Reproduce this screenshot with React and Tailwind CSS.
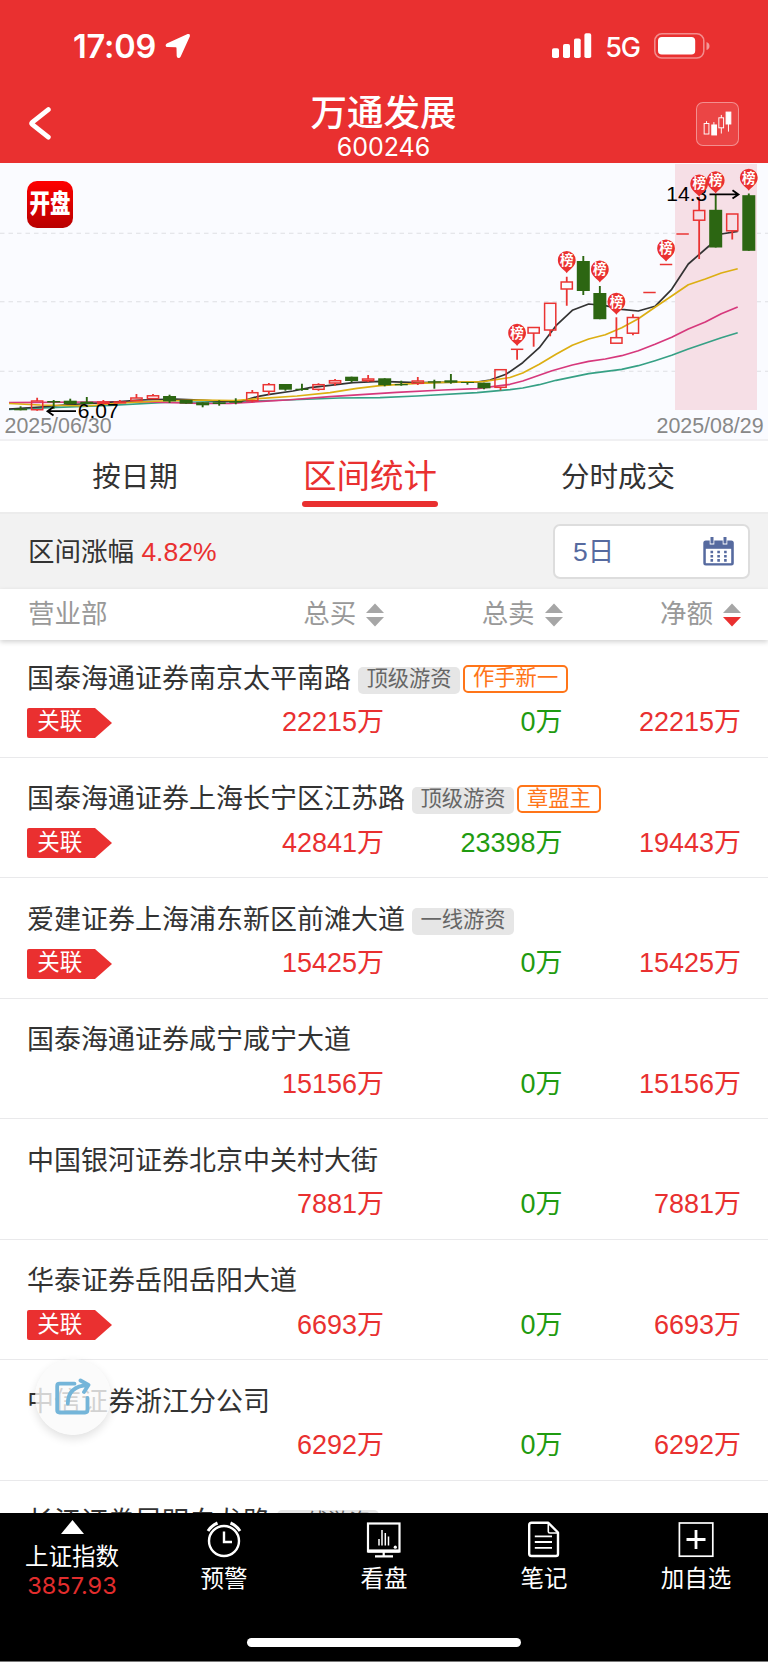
const CANDLE_START = 20.6;
const CANDLE_STEP = 16.55;

// [direction, body top, body bottom, wick top, wick bottom]
const candles = [
  ['down', 408.7, 410.3, 406.3, 410.3],
  ['up', 401, 409.7, 397.7, 410.7],
  ['down', 401, 402.5, 400, 408.7],
  ['down', 400.7, 404, 398.7, 404],
  ['down', 401.7, 404, 397, 404],
  ['up', 402, 403.4, 400, 404.3],
  ['up', 402, 402.8, 400, 403],
  ['up', 398, 400.4, 394, 400.4],
  ['up', 395.8, 398.6, 394, 398.6],
  ['down', 396, 401.3, 394.7, 403],
  ['down', 400, 403.7, 400, 403.7],
  ['down', 402.3, 405.3, 402.3, 407.3],
  ['down', 402.3, 404, 400.3, 405.7],
  ['down', 401, 402.7, 398.3, 404.3],
  ['up', 392.7, 400.7, 390, 402.3],
  ['up', 384.7, 391.3, 383, 395],
  ['down', 384, 389.7, 384, 390.7],
  ['down', 388.7, 390, 383.7, 390.7],
  ['up', 384.7, 389.3, 383.3, 390.7],
  ['up', 380.7, 383, 379, 385.7],
  ['down', 376.7, 381, 376.7, 382.3],
  ['up', 379, 380.7, 375, 382],
  ['down', 378.3, 385.3, 378.3, 386.3],
  ['down', 384, 385.3, 380.7, 385.7],
  ['up', 381, 383.3, 377, 385],
  ['down', 381.3, 382.7, 379.7, 388.7],
  ['down', 380.3, 382.7, 374, 383.7],
  ['down', 382, 383, 382, 384.7],
  ['down', 382.7, 388.3, 382.7, 389.3],
  ['up', 369.7, 387.3, 369.7, 390.3],
  ['up', 349.3, 349.3, 349.3, 359.7],
  ['up', 327.5, 333.1, 327.5, 346.7],
  ['up', 303.3, 330, 303.3, 336.3],
  ['up', 282, 289, 276.7, 305.7],
  ['down', 261, 291, 256, 295],
  ['down', 293, 319.2, 286, 319.2],
  ['up', 337.7, 343.2, 317.3, 343.2],
  ['up', 317.5, 333.2, 314.3, 335.3],
  ['up', 292.5, 292.5, 292.5, 292.5],
  ['up', 264.5, 264.5, 264.5, 264.5],
  ['up', 234, 234, 234, 234],
  ['up', 210.5, 220.2, 197, 259],
  ['down', 209.8, 247.5, 195, 247.5],
  ['up', 214, 230.8, 214, 239.5],
  ['down', 195.2, 250.8, 193.5, 250.8],
];

// [candle index, centre y]
const pins = [
  [30, 332.7],
  [33, 260],
  [35, 269.3],
  [36, 301.6],
  [39, 248.3],
  [41, 183.5],
  [42, 180.2],
  [44, 177.6],
];

const averages = [
  {
    color: '#36a085',
    points:
      '9,409.3 50,407.7 110,405.3 165,402.5 200,402 230,401.7 287,400 340,398 380,397.7 417,396 477,392.7 510,389.7 522.7,388 539.3,384.7 556,380.3 588.7,373.7 621.7,369.3 638.3,365.7 655,360.7 671.7,355.3 688.3,349 721.3,337.7 737.7,332.7',
  },
  {
    color: '#d6387c',
    points:
      '9,402.7 90,402 140,401.6 200,403.5 230,403.3 287,400 330,396.7 396.7,392.3 443,390 477,388.7 510,384.3 522.7,381 552,370.7 572.3,365 588.7,361.3 605.3,359 621.7,355.7 638.3,350.7 655,344.3 671.7,337.3 688.3,329 705.3,322 721.3,313.7 737.7,307',
  },
  {
    color: '#333',
    points:
      '9,409 40,407 70,404.5 100,403 140,400 175,399 200,400 225,401.5 242,401 257,396.7 268,394.7 293,391 310,387.7 330,385.3 353,382.7 380,381.3 417,382.7 477,382 490,380 506,374.3 522.7,362.7 539.3,347.7 556,325.7 572.3,310.3 588.7,304 605.3,305.7 621.7,309.3 638.3,311 655,306.3 671.7,289.3 688.3,264 709,246 721.3,234 737.7,231.3',
  },
  {
    color: '#dcae12',
    points:
      '9,403.5 40,405 87,406 120,403 160,401 200,400 235,400.5 258,398.7 297,396 330,392.7 357,388.3 380,385.7 417,383.3 443,382.3 483,381.7 510,377.5 522.7,373 539.3,364.3 556,354.3 572.3,345.3 588.7,339 605.3,334.7 621.7,327.7 638.3,318.7 655,307.3 671.7,296 688.3,284.7 705.3,279 721.3,273 737.7,268.7',
  },
];

const rows = [
  { name: '国泰海通证券南京太平南路', level: '顶级游资', player: '作手新一', linked: true, buy: '22215', sell: '0', net: '22215' },
  { name: '国泰海通证券上海长宁区江苏路', level: '顶级游资', player: '章盟主', linked: true, buy: '42841', sell: '23398', net: '19443' },
  { name: '爱建证券上海浦东新区前滩大道', level: '一线游资', linked: true, buy: '15425', sell: '0', net: '15425' },
  { name: '国泰海通证券咸宁咸宁大道', buy: '15156', sell: '0', net: '15156' },
  { name: '中国银河证券北京中关村大街', buy: '7881', sell: '0', net: '7881' },
  { name: '华泰证券岳阳岳阳大道', linked: true, buy: '6693', sell: '0', net: '6693' },
  { name: '中信证券浙江分公司', buy: '6292', sell: '0', net: '6292' },
  { name: '长江证券昆明白龙路', level: '一线游资', buy: '', sell: '', net: '' },
];

function StatusBar() {
  return (
    <div className="flex h-[92px] items-center pl-[73px] pr-[58px] text-white font-['Inter']">
      <span className="mt-[2px] text-[32.5px] leading-none font-semibold tracking-[-0.2px]">17:09</span>
      <svg className="ml-[9px] h-[26px] w-[26px]" viewBox="0 0 26 26" fill="currentColor">
        <path d="M22.6 1.1 L1.8 10.4 Q.2 11.4 .7 12.9 Q1.2 14.1 3 14.1 L10.8 14.3 Q11.5 14.4 11.5 15.1 L11.7 23 Q11.9 24.8 13.4 25.1 Q15 25.2 15.7 23.6 L24.9 3.2 Q25.5 .2 22.6 1.1Z" />
      </svg>
      <svg className="ml-auto h-[26px] w-[40px]" viewBox="0 0 40 26" fill="currentColor">
        <rect x="0" y="15.3" width="7" height="9.7" rx="1.8" />
        <rect x="11" y="11" width="7" height="14" rx="1.8" />
        <rect x="22" y="5.5" width="6.7" height="19.5" rx="1.8" />
        <rect x="32.4" y="0.3" width="6.8" height="24.7" rx="1.8" />
      </svg>
      <span className="ml-[13px] mt-[3px] text-[27px] leading-none font-medium tracking-[-1px]">5G</span>
      <svg className="ml-[14px] h-[26px] w-[56px]" viewBox="0 0 56 26" fill="none">
        <rect x="0.8" y="0.8" width="49" height="24.2" rx="7" stroke="#fff" strokeOpacity=".45" strokeWidth="1.5" />
        <rect x="4" y="4" width="37.2" height="17.6" rx="3.8" fill="#fff" />
        <path d="M52.5 9 Q55.5 10 55.5 13 Q55.5 16 52.5 17Z" fill="#fff" fillOpacity=".5" />
      </svg>
    </div>
  );
}

function TitleBar() {
  return (
    <div className="flex h-[71px] items-start justify-between pl-[28px] pr-[29px] text-white">
      <svg className="mt-[14px] h-[36px] w-[43px]" viewBox="0 0 43 36" fill="none">
        <path d="M20.3 3.6 L4.2 16.4 Q3.2 17.4 4.2 18.4 L20.3 31.2" stroke="#fff" strokeWidth="4.8" strokeLinecap="round" strokeLinejoin="round" />
      </svg>
      <div className="flex flex-col items-center">
        <h1 className="mt-[3.5px] text-[36.5px] leading-[36px] font-medium">万通发展</h1>
        <span className="mt-[2.5px] text-[25px] leading-[26px] font-['Inter']">600246</span>
      </div>
      <button className="mt-[10px] h-[44px] w-[43px] rounded-[7px] border border-white/40 bg-white/10">
        <svg className="h-full w-full" viewBox="0 0 43 44" fill="none" stroke="#fff" strokeWidth="1">
          <rect x="7.5" y="21.5" width="5" height="11" />
          <path d="M10 19v2M17.7 20v3M25.5 12.5v3M25.5 26v6M33 20v10" />
          <rect x="15.5" y="23" width="5" height="10.5" fill="#fff" />
          <rect x="22.9" y="15.5" width="5" height="10.5" />
          <rect x="30.5" y="9.5" width="5" height="12.5" fill="#fff" />
        </svg>
      </button>
    </div>
  );
}

function Candle({ index, candle }) {
  const [dir, top, bottom, high, low] = candle;
  const x = CANDLE_START + CANDLE_STEP * index;
  if (dir === 'down') {
    return (
      <g fill="#2c6612" stroke="#2c6612">
        <path d={`M${x} ${high}V${low}`} strokeWidth="1.9" />
        <rect x={x - 6.5} y={top} width="13" height={bottom - top} stroke="none" />
      </g>
    );
  }
  return (
    <g fill="none" stroke="#ea3433" strokeWidth="1.5">
      <path d={`M${x} ${high}V${top}M${x} ${bottom}V${low}`} strokeWidth="1.8" />
      {bottom > top ? (
        <rect x={x - 5.6} y={top} width="11.2" height={bottom - top} />
      ) : (
        <path d={`M${x - 6.2} ${top}h12.4`} />
      )}
    </g>
  );
}

function Pin({ index, y }) {
  const x = CANDLE_START + CANDLE_STEP * index;
  return (
    <g>
      <path
        d={`M${x} ${y + 13.2}C${x - 2.5} ${y + 9.5} ${x - 8.9} ${y + 7} ${x - 8.9} ${y}A8.9 8.9 0 1 1 ${x + 8.9} ${y}C${x + 8.9} ${y + 7} ${x + 2.5} ${y + 9.5} ${x} ${y + 13.2}Z`}
        fill="#ea3030"
      />
      <text x={x} y={y + 4.9} fontSize="13.5" fontWeight="700" fill="#fff" textAnchor="middle">
        榜
      </text>
    </g>
  );
}

function KLineChart() {
  return (
    <div className="relative h-[278px] border-b-2 border-[#f0f0f2] bg-[#fafbff]">
      <svg className="block h-[276px] w-full" viewBox="0 163 768 276">
        <g stroke="#dedfe3" strokeWidth="1.1" strokeDasharray="4.5 4">
          <path d="M0 233.3H768M0 301.8H768M0 371.3H768" />
        </g>
        <rect x="675" y="164" width="82" height="246" fill="#f6dfe6" />
        <g fill="none" strokeWidth="1.7" strokeLinejoin="round">
          {averages.map((line) => (
            <polyline key={line.color} points={line.points} stroke={line.color} />
          ))}
        </g>
        {candles.map((candle, i) => (
          <Candle key={i} index={i} candle={candle} />
        ))}
        <g fontFamily="Liberation Sans" fontSize="21.4" fill="#888">
          <text x="4.5" y="432.6">2025/06/30</text>
          <text x="656.5" y="432.6">2025/08/29</text>
        </g>
        <g fontFamily="Liberation Sans" fontSize="21" fill="#000">
          <text x="77.8" y="418.2">6.07</text>
          <text x="666.3" y="201">14.3</text>
        </g>
        <g fill="none" stroke="#000" strokeWidth="1.8">
          <path d="M76 411.2H48M53.5 407L47.5 411.2L53.5 415.4" />
          <path d="M709.5 194.4H738M732.5 190.2L738.5 194.4L732.5 198.6" />
        </g>
        {pins.map(([index, y]) => (
          <Pin key={index} index={index} y={y} />
        ))}
      </svg>
      <div className="absolute top-[18px] left-[27px] flex h-[46.5px] w-[46px] items-center justify-center rounded-[10px] bg-linear-to-b from-[#ff0000] to-[#b80000] text-[20.5px] leading-none font-black text-white">
        <span className="scale-y-[1.28]">开盘</span>
      </div>
    </div>
  );
}

function Tabs() {
  return (
    <div className="flex h-[71px] text-[28.5px] leading-none text-[#333]">
      <div className="flex w-[270px] justify-center pt-[22px]">按日期</div>
      <div className="flex w-[200px] justify-center text-[#e93030]">
        <div className="flex h-[66px] w-[136px] flex-col items-center justify-between pt-[19px]">
          <span className="text-[33.5px] leading-none whitespace-nowrap">区间统计</span>
          <span className="h-[6px] w-full rounded-full bg-[#e93030]" />
        </div>
      </div>
      <div className="flex w-[298px] justify-center pt-[22px] pr-[2px]">分时成交</div>
    </div>
  );
}

function CalendarIcon() {
  return (
    <svg className="h-[29px] w-[31px]" viewBox="0 0 31 29">
      <rect x="0.3" y="3.5" width="30.5" height="25" rx="2.5" fill="#566a9f" />
      <rect x="2.8" y="11.8" width="25.4" height="14.4" fill="#fff" />
      <path d="M9 1v6.5M22 1v6.5" stroke="#fff" strokeWidth="4.6" />
      <path d="M9 0v6.6M22 0v6.6" stroke="#566a9f" strokeWidth="3" />
      <path d="M7.5 15h16.5M7.5 19.2h16.5M7.5 23.4h16.5" stroke="#566a9f" strokeWidth="2.6" strokeDasharray="2.6 4.2" />
    </svg>
  );
}

function RangeBar() {
  return (
    <div className="flex h-[77px] items-center justify-between border-t-2 border-[#ececec] bg-[#f2f2f2] pr-[18px] pl-[28px] text-[26.5px] leading-none">
      <p className="mt-[1px] text-[#333]">
        区间涨幅 <span className="text-[#e93030]">4.82%</span>
      </p>
      <div className="flex h-[55px] w-[197px] items-center justify-between rounded-[7px] border-2 border-[#ddd] bg-white pr-[14px] pl-[18px] text-[#566a9f]">
        <span className="mt-[1px]">5日</span>
        <CalendarIcon />
      </div>
    </div>
  );
}

function SortIcon({ active }) {
  return (
    <svg className="h-[24px] w-[18px]" viewBox="0 0 18 24">
      <path d="M9 0.5L18 10H0Z" fill="#a6a6a6" />
      <path d="M9 23.5L18 14H0Z" fill={active ? '#ea3030' : '#a6a6a6'} />
    </svg>
  );
}

function TableHead() {
  const columns = [{ label: '总买' }, { label: '总卖' }, { label: '净额', active: true }];
  return (
    <div className="relative z-10 -mb-[3px] flex h-[51px] items-center bg-white pr-[27px] pl-[28px] text-[26.5px] leading-none text-[#999] shadow-[0_2px_5px_rgba(0,0,0,0.18)]">
      <span className="w-[178px]">营业部</span>
      {columns.map((col) => (
        <span key={col.label} className="flex w-[178.5px] items-center justify-end gap-[10px]">
          {col.label}
          <SortIcon active={col.active} />
        </span>
      ))}
    </div>
  );
}

function SeatRow({ row }) {
  return (
    <div className="h-[120.5px] border-b border-[#e9e9eb] pt-[27px] pr-[27px] pl-[27px]">
      <div className="flex h-[30px] items-center">
        <span className="text-[27px] leading-none text-[#333]">{row.name}</span>
        {row.level && (
          <span className="mt-[2px] ml-[7px] flex h-[27px] w-[102px] items-center justify-center rounded-[5px] bg-[#e6e6e6] pb-[1px] text-[21.3px] leading-none text-[#666]">
            {row.level}
          </span>
        )}
        {row.player && (
          <span className="-mt-[1px] ml-[3px] flex h-[28px] items-center rounded-[5px] border-2 border-[#ff7519] px-[8px] pt-[1px] text-[21.3px] leading-none text-[#ff7519]">
            {row.player}
          </span>
        )}
      </div>
      <div className="mt-[13px] flex h-[31px] items-center text-[27px] leading-none text-[#e93030]">
        <div className="w-[178.5px]">
          {row.linked && (
            <span className="flex items-center">
              <span className="flex h-[30px] w-[67.5px] items-center justify-center rounded-l-[2px] bg-[#ea3030] pr-[2px] text-[22.5px] leading-none text-white">
                关联
              </span>
              <svg className="h-[30px] w-[17px]" viewBox="0 0 17 30">
                <path d="M0 0L17 15L0 30Z" fill="#ea3030" />
              </svg>
            </span>
          )}
        </div>
        <span className="w-[178.5px] text-right">{row.buy && `${row.buy}万`}</span>
        <span className="w-[178.5px] text-right text-[#1f9b10]">{row.sell && `${row.sell}万`}</span>
        <span className="w-[178.5px] text-right">{row.net && `${row.net}万`}</span>
      </div>
    </div>
  );
}

function ShareButton() {
  return (
    <button className="absolute top-[1359px] left-[35px] z-20 flex h-[76px] w-[76px] items-center justify-center rounded-full bg-[#fafafa]/80 shadow-[0_4px_10px_rgba(0,0,0,0.12)]">
      <svg className="h-[38px] w-[38px]" viewBox="0 0 38 38" fill="none" stroke="#74b5d9" strokeWidth="3.8" strokeLinecap="round" strokeLinejoin="round">
        <path d="M20.5 5.7H5.5Q3.2 5.7 3.2 8V32.3Q3.2 34.5 5.5 34.5H31Q33.5 34.5 33.5 32.3V20" />
        <path d="M13.8 25.5C14 15 20 7.8 34 7.2M26.5 2.5L34.5 7L30 14" />
      </svg>
    </button>
  );
}

function AlarmIcon() {
  return (
    <svg className="h-[37px] w-[36px]" viewBox="0 0 36 37" fill="none" stroke="#fff" strokeWidth="2.4">
      <circle cx="18" cy="20" r="15" />
      <path d="M18 10.5V21H26" />
      <path d="M2 10Q5.5 4.5 11.5 2M34 10Q30.5 4.5 24.5 2" strokeWidth="3" />
    </svg>
  );
}

function MonitorIcon() {
  return (
    <svg className="h-[37px] w-[36px]" viewBox="0 0 36 37" fill="none" stroke="#fff">
      <rect x="2" y="2.5" width="31.5" height="28" strokeWidth="2.2" />
      <path d="M2 30H33.5" strokeWidth="3.2" />
      <path d="M17.7 30V35M9 35.3H27" strokeWidth="2.2" />
      <path d="M13 18V24.5M16 9V24.5M19.3 12V24.5M22.5 15.5V24.5" strokeWidth="1.5" />
      <circle cx="29.3" cy="26.2" r="1.6" fill="#fff" stroke="none" />
    </svg>
  );
}

function NoteIcon() {
  return (
    <svg className="h-[37px] w-[36px]" viewBox="0 0 36 37" fill="none" stroke="#fff" strokeWidth="2.4" strokeLinejoin="round">
      <path d="M5.5 1.8H22.3L32 11.5V33Q32 35 30 35H5.5Q3.2 35 3.2 33V4Q3.2 1.8 5.5 1.8Z" />
      <path d="M22.3 2V10.5Q22.3 12 23.8 12H32" strokeWidth="1.6" />
      <path d="M8.8 15.3H26M8.8 21H26M8.8 26.8H26" strokeWidth="1.8" />
    </svg>
  );
}

function AddIcon() {
  return (
    <svg className="h-[37px] w-[36px]" viewBox="0 0 36 37" fill="none" stroke="#fff">
      <rect x="1.4" y="2" width="33.4" height="33.2" strokeWidth="1.7" />
      <path d="M18 9V28M8.5 18.5H27.5" strokeWidth="2.8" />
    </svg>
  );
}

function BottomBar() {
  const actions = [
    { label: '预警', icon: <AlarmIcon />, width: 'w-[160px]' },
    { label: '看盘', icon: <MonitorIcon />, width: 'w-[160px]' },
    { label: '笔记', icon: <NoteIcon />, width: 'w-[160px]' },
    { label: '加自选', icon: <AddIcon />, width: 'w-[144px]' },
  ];
  return (
    <nav className="relative z-10 flex h-[149.5px] flex-col items-center border-b border-[#777] bg-black text-white">
      <div className="flex h-[125px] w-full">
        <div className="flex w-[144px] flex-col items-center pt-[7px]">
          <svg className="h-[14px] w-[23px]" viewBox="0 0 23 14">
            <path d="M11.5 0L23 14H0Z" fill="#fff" />
          </svg>
          <span className="mt-[11px] text-[23.5px] leading-[24px]">上证指数</span>
          <span className="mt-[4px] text-[23.5px] leading-[26px] text-[#e22d2d] font-['Inter']">3857.93</span>
        </div>
        {actions.map((item) => (
          <div key={item.label} className={`flex flex-col items-center pt-[8px] ${item.width}`}>
            {item.icon}
            <span className="mt-[9px] text-[23.5px] leading-[24px]">{item.label}</span>
          </div>
        ))}
      </div>
      <div className="h-[9px] w-[274px] rounded-full bg-white" />
    </nav>
  );
}

export default function App() {
  return (
    <div className="relative flex h-[1662px] w-[768px] flex-col overflow-hidden bg-white font-['Liberation_Sans','Noto_Sans_CJK_SC',sans-serif]">
      <header className="h-[163px] shrink-0 bg-[#e93030]">
        <StatusBar />
        <TitleBar />
      </header>
      <KLineChart />
      <Tabs />
      <RangeBar />
      <TableHead />
      <main className="min-h-0 flex-1 overflow-hidden">
        {rows.map((row) => (
          <SeatRow key={row.name} row={row} />
        ))}
      </main>
      <BottomBar />
      <ShareButton />
    </div>
  );
}
